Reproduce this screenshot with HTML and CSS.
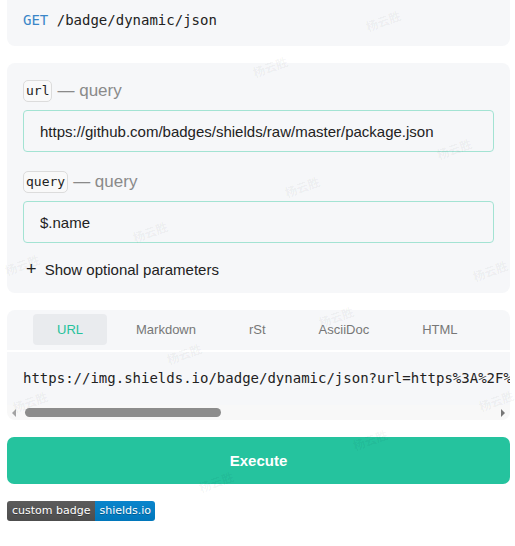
FILE: index.html
```html
<!DOCTYPE html>
<html lang="en">
<head>
  <meta charset="UTF-8">
  <title>Dynamic JSON badge</title>
  <link rel="stylesheet" href="styles.css">
</head>
<body>
  <div class="card route">
    <code><span class="method">GET</span> /badge/dynamic/json</code>
  </div>

  <div class="card params">
    <div class="param">
      <div class="label"><code class="chip">url</code> <span class="kind">— query</span></div>
      <input class="field" type="text" value="https://github.com/badges/shields/raw/master/package.json">
    </div>
    <div class="param">
      <div class="label"><code class="chip">query</code> <span class="kind">— query</span></div>
      <input class="field" type="text" value="$.name">
    </div>
    <div class="more"><span class="plus">+</span> Show optional parameters</div>
  </div>

  <div class="card snippet">
    <div class="tabs">
      <span class="tab active">URL</span>
      <span class="tab">Markdown</span>
      <span class="tab">rSt</span>
      <span class="tab">AsciiDoc</span>
      <span class="tab">HTML</span>
    </div>
    <pre class="code">https://img.shields.io/badge/dynamic/json?url=https%3A%2F%2Fgithub.com%2Fbadges%2Fshields%2Fraw%2Fmaster%2Fpackage.json&amp;query=%24.name</pre>
    <div class="hscroll">
      <span class="arrow left"></span>
      <span class="track"><span class="thumb"></span></span>
      <span class="arrow right"></span>
    </div>
  </div>

  <button class="execute">Execute</button>

  <div class="badge"><span class="b-label">custom badge</span><span class="b-msg">shields.io</span></div>

  <!-- watermark layer -->
  <div class="marks">
    <span style="left:365px;top:12px">杨云胜</span>
    <span style="left:252px;top:58px">杨云胜</span>
    <span style="left:436px;top:140px">杨云胜</span>
    <span style="left:284px;top:178px">杨云胜</span>
    <span style="left:132px;top:223px">杨云胜</span>
    <span style="left:4px;top:256px">杨云胜</span>
    <span style="left:472px;top:262px">杨云胜</span>
    <span style="left:318px;top:308px">杨云胜</span>
    <span style="left:166px;top:345px">杨云胜</span>
    <span style="left:12px;top:393px">杨云胜</span>
    <span style="left:478px;top:392px">杨云胜</span>
    <span style="left:352px;top:431px">杨云胜</span>
    <span style="left:198px;top:473px">杨云胜</span>
    <span style="left:44px;top:517px">杨云胜</span>
  </div>
</body>
</html>
```

FILE: styles.css
```css
body {
  margin: 0;
  padding: 0 5px 0 7px;
  font-family: "Liberation Sans", Arial, sans-serif;
  color: #222;
  background: #fff;
  position: relative;
}
code, pre {
  font-family: "DejaVu Sans Mono", monospace;
}

.card {
  background: #f6f7f9;
  border-radius: 8px;
}

.route {
  margin-top: -12px;
  padding: 22px 16px 16px;
  font-size: 14px;
  line-height: 20px;
}
.method { color: #3a86c8; }

.params {
  margin-top: 17px;
  padding: 17px 16px 13px;
}
.param + .param { margin-top: 19px; }
.label {
  display: flex;
  align-items: center;
  gap: 5px;
  height: 22px;
  margin-bottom: 8px;
}
.chip {
  font-size: 13px;
  line-height: 20px;
  padding: 0 2px;
  border: 1px solid #dcdcdc;
  border-radius: 5px;
  background: #f9f9f9;
  color: #222;
}
.kind {
  font-size: 17px;
  color: #8a8a8a;
}
.field {
  display: block;
  box-sizing: border-box;
  width: 100%;
  height: 42px;
  padding: 0 16px;
  font: 15px "Liberation Sans", Arial, sans-serif;
  color: #222;
  background: #f6f7f9;
  border: 1px solid #a3e3d3;
  border-radius: 4px;
  outline: none;
}
.more {
  margin-top: 16px;
  font-size: 15px;
  line-height: 20px;
  padding-left: 3px;
}
.plus {
  font-size: 18px;
  margin-right: 4px;
}

.snippet {
  margin-top: 17px;
  overflow: hidden;
  background: none;
}
.tabs {
  display: flex;
  gap: 5px;
  padding: 4px 26px 5px;
  background: #f6f7f9;
  margin-bottom: 2px;
}
.tab {
  padding: 0 24px;
  height: 31px;
  line-height: 31px;
  font-size: 13px;
  color: #777;
  border-radius: 4px;
}
.tab.active {
  background: #e9ebee;
  color: #26c29c;
}
.code {
  margin: 0;
  padding: 0 16px;
  height: 53px;
  line-height: 53px;
  font-size: 14px;
  background: #f6f7f9;
  white-space: pre;
  overflow: hidden;
}
.hscroll {
  display: flex;
  align-items: center;
  height: 15px;
  background: #f8f8f8;
}
.arrow {
  width: 0;
  height: 0;
  border-top: 4px solid transparent;
  border-bottom: 4px solid transparent;
  margin: 0 5px;
}
.arrow.left { border-right: 4px solid #a3a3a3; }
.arrow.right { border-left: 4px solid #777; }
.track {
  flex: 1;
  height: 9px;
  padding-left: 4px;
}
.thumb {
  display: block;
  width: 196px;
  height: 9px;
  border-radius: 5px;
  background: #8c8c8c;
}

.execute {
  display: block;
  width: 100%;
  height: 47px;
  margin-top: 17px;
  border: none;
  border-radius: 7px;
  background: #25c39e;
  color: #fff;
  font: bold 15px "Liberation Sans", Arial, sans-serif;
}

.badge {
  display: inline-flex;
  margin-top: 17px;
  height: 20px;
  border-radius: 3px;
  overflow: hidden;
  font: 11px "DejaVu Sans", Verdana, sans-serif;
  line-height: 20px;
  color: #fff;
  text-shadow: 0 1px 0 rgba(1, 1, 1, 0.3);
}
.b-label {
  padding: 0 5px;
  background: linear-gradient(#5c5c5c, #4d4d4d);
}
.b-msg {
  padding: 0 4px;
  background: linear-gradient(#0a85cc, #0077bb);
}

.marks {
  position: absolute;
  inset: 0;
  pointer-events: none;
  overflow: hidden;
  height: 546px;
}
.marks span {
  position: absolute;
  font: bold 12px "Noto Sans CJK SC", sans-serif;
  color: rgba(0, 0, 0, 0.05);
  transform: rotate(-20deg);
}
```
